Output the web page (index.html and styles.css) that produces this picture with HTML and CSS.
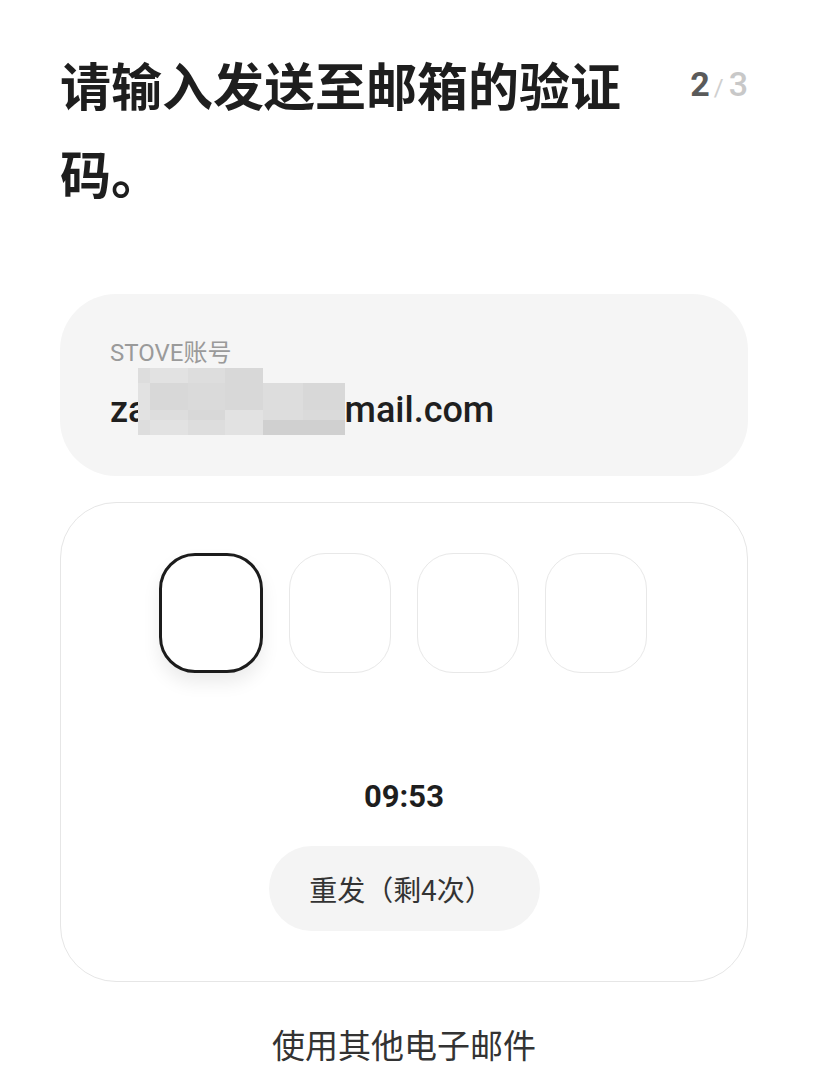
FILE: index.html
```html
<!DOCTYPE html>
<html lang="zh-CN">
<head>
<meta charset="utf-8">
<title>验证码</title>
<link rel="stylesheet" href="styles.css">
</head>
<body>
<main class="page">
  <header class="head">
    <h1 class="title">请输入发送至邮箱的验证码。</h1>
    <div class="step"><span class="step-cur">2</span><span class="step-sep">/</span><span class="step-total">3</span></div>
  </header>

  <section class="account">
    <div class="account-label">STOVE账号</div>
    <div class="account-email">za<span class="redacted">xxxxxxxx@g</span>mail.com</div>
    <div class="mosaic" aria-hidden="true">
      <i class="m c2"></i><i class="m c1"></i><i class="m c2"></i><i class="m c3"></i><i class="m c0"></i><i class="m c0"></i>
      <i class="m c1"></i><i class="m c3"></i><i class="m c4"></i><i class="m c3"></i><i class="m c2"></i><i class="m c3"></i>
      <i class="m c1"></i><i class="m c2"></i><i class="m c3"></i><i class="m c1"></i><i class="m c2"></i><i class="m c4"></i>
      <i class="m c2"></i><i class="m c1"></i><i class="m c2"></i><i class="m c1"></i><i class="m c5"></i><i class="m c5"></i>
    </div>
  </section>

  <section class="verify">
    <div class="codes">
      <div class="code active"></div>
      <div class="code"></div>
      <div class="code"></div>
      <div class="code"></div>
    </div>
    <div class="timer">09:53</div>
    <button class="resend">重发（剩4次）</button>
  </section>

  <div class="other">使用其他电子邮件</div>
</main>
</body>
</html>
```

FILE: styles.css
```css
* { box-sizing: border-box; }

html, body {
  margin: 0;
  padding: 0;
  background: #ffffff;
}

body {
  font-family: "Noto Sans CJK SC", "Noto Sans", Roboto, sans-serif;
  color: #222222;
}

.page {
  padding: 40px 78px 0 60px;
}

.head {
  display: flex;
  justify-content: space-between;
  align-items: flex-start;
}

.title {
  margin: 0;
  width: 590px;
  font-size: 51px;
  line-height: 88px;
  font-weight: 700;
  color: #1e1e1e;
}

.step {
  font-family: Roboto, "Noto Sans", sans-serif;
  line-height: 88px;
  white-space: nowrap;
}

.step-cur {
  font-size: 34px;
  font-weight: 700;
  color: #5a5a5a;
}

.step-sep {
  font-size: 24px;
  color: #cfcfcf;
  margin: 0 5px 0 4px;
}

.step-total {
  font-size: 34px;
  font-weight: 500;
  color: #c8c8c8;
}

.account {
  position: relative;
  margin-top: 78px;
  height: 182px;
  background: #f5f5f5;
  border-radius: 56px;
  padding: 42px 50px 0 50px;
}

.account-label {
  font-family: Roboto, "Noto Sans CJK SC", sans-serif;
  font-size: 24px;
  line-height: 34px;
  color: #9a9a9a;
}

.account-email {
  margin-top: 18px;
  font-family: Roboto, "Noto Sans", sans-serif;
  font-size: 36px;
  line-height: 44px;
  font-weight: 500;
  color: #1f1f1f;
  white-space: nowrap;
}

.redacted {
  display: inline-block;
  width: 197px;
  height: 44px;
  overflow: hidden;
  vertical-align: top;
  color: transparent;
}

.mosaic {
  position: absolute;
  left: 78px;
  top: 74px;
  width: 207px;
  height: 67px;
  display: grid;
  grid-template-columns: 12px 38px 37px 38px 40px 42px;
  grid-template-rows: 15px 27px 10px 15px;
}

.m { display: block; }
.c0 { background: #f5f5f5; }
.c1 { background: #e2e2e2; }
.c2 { background: #dddddd; }
.c3 { background: #d8d8d8; }
.c4 { background: #dadada; }
.c5 { background: #d0d0d0; }

.verify {
  margin-top: 26px;
  height: 480px;
  border: 1.5px solid #e6e6e6;
  border-radius: 56px;
  padding-top: 50px;
  display: flex;
  flex-direction: column;
  align-items: center;
}

.codes {
  display: flex;
  gap: 26px;
  margin-right: 2px;
}

.code {
  width: 102px;
  height: 120px;
  border: 1.5px solid #e8e8e8;
  border-radius: 36px;
  background: #fff;
}

.code.active {
  width: 104px;
  border: 3px solid #1c1c1c;
  box-shadow: 0 10px 18px rgba(0, 0, 0, 0.08);
}

.timer {
  margin-top: 106px;
  font-family: Roboto, "Noto Sans", sans-serif;
  font-size: 31px;
  line-height: 36px;
  font-weight: 700;
  color: #1e1e1e;
}

.resend {
  margin-top: 31px;
  height: 85px;
  width: 271px;
  border: none;
  border-radius: 43px;
  background: #f4f4f4;
  font-family: "Noto Sans CJK SC", Roboto, sans-serif;
  font-size: 28px;
  color: #333333;
  padding: 0 6px 0 0;
  cursor: pointer;
}

.other {
  margin-top: 38px;
  text-align: center;
  font-size: 33px;
  line-height: 48px;
  color: #333333;
}
```
